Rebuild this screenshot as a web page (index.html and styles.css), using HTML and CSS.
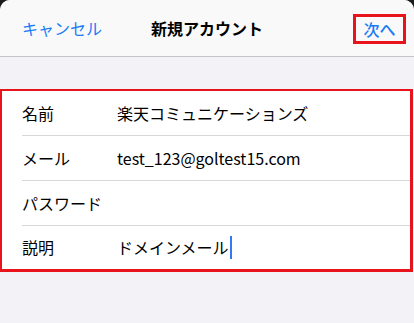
FILE: index.html
```html
<!DOCTYPE html>
<html lang="ja">
<head>
<meta charset="utf-8">
<link rel="stylesheet" href="styles.css">
</head>
<body>
<div class="sheet">
  <header class="nav">
    <span class="nav-cancel">キャンセル</span>
    <span class="nav-title">新規アカウント</span>
    <span class="nav-next">次へ</span>
  </header>
  <section class="form">
    <div class="row"><span class="label">名前</span><span class="value">楽天コミュニケーションズ</span></div>
    <div class="row"><span class="label">メール</span><span class="value">test_123@goltest15.com</span></div>
    <div class="row"><span class="label">パスワード</span><span class="value"></span></div>
    <div class="row"><span class="label">説明</span><span class="value">ドメインメール<span class="cursor"></span></span></div>
  </section>
</div>
</body>
</html>
```

FILE: styles.css
```css
* { box-sizing: border-box; }
html, body {
  margin: 0;
  padding: 0;
  background: #1c1c1e;
  width: 414px;
  height: 323px;
  overflow: hidden;
}
.sheet {
  width: 414px;
  height: 323px;
  background: #f2f2f7;
  border-radius: 10px 10px 0 0;
  overflow: hidden;
  font-family: "Noto Sans CJK JP", "Noto Sans", sans-serif;
  font-size: 16px;
  color: #000;
}
.nav {
  height: 57px;
  background: #f9f9fa;
  border-bottom: 1px solid #c6c6c8;
  display: grid;
  grid-template-columns: 1fr auto 1fr;
  align-items: center;
  padding: 0 8px;
}
.nav-cancel { color: #1a7cf5; justify-self: start; margin-left: 14px; margin-top: -1px; }
.nav-title { font-weight: bold; margin-top: -1px; }
.nav-next {
  justify-self: end;
  color: #1a7cf5;
  font-weight: 500;
  border: 3px solid #e8131b;
  width: 53px;
  height: 30px;
  display: flex;
  align-items: center;
  justify-content: center;
  margin-top: 1px;
}
.form {
  margin-top: 32px;
  background: #fff;
  border: 2px solid #e8131b;
  border-right-width: 3px;
  border-bottom-width: 3px;
  width: 413px;
}
.row {
  display: flex;
  align-items: center;
  height: 45px;
  margin-left: 20px;
  border-bottom: 1px solid #d8d8dc;
  padding-bottom: 1px;
}
.row:last-child { border-bottom: none; height: 43px; }
.label { width: 95px; flex: none; }
.value { display: flex; align-items: center; }
.cursor {
  display: inline-block;
  width: 2px;
  height: 23px;
  background: #3478f6;
  margin-left: 1px;
}
```
